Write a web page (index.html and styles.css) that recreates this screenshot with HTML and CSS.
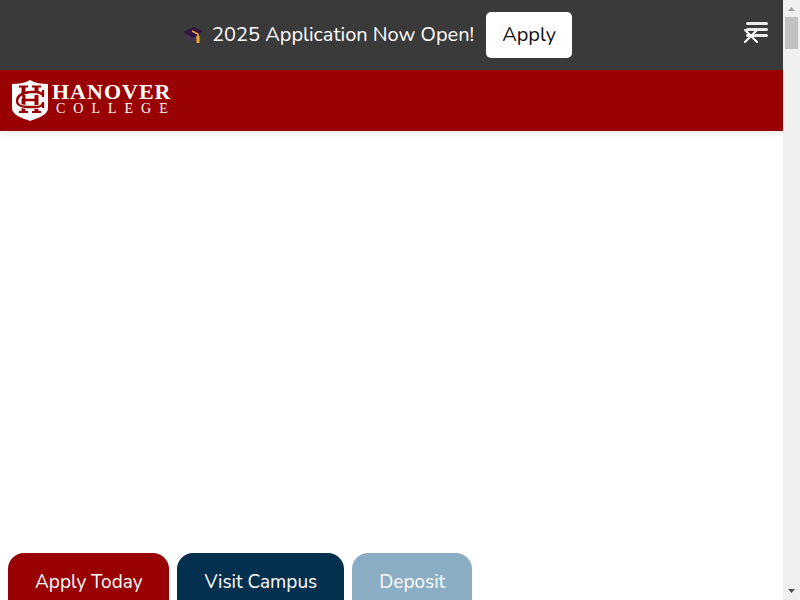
FILE: index.html
```
<!DOCTYPE html>
<html lang="en">
<head>
    <meta charset="UTF-8">
    <title>Hanover College</title>
    <link rel="stylesheet" href="styles.css">
</head>
<body>
<div class="window">
    <div class="page">
        <!-- announcement -->
        <div class="notice">
            <p class="notice-text">
                <svg class="cap" viewBox="0 0 20 20" aria-hidden="true">
                    <path d="M4 9v5c2 3 8 3 10 0V9z" fill="#493456"/>
                    <path d="M0 7L10 2l10 4-10 7z" fill="#321342"/>
                    <path d="M9 6l6 3v4" fill="none" stroke="#e9a23b" stroke-width="1.500"/>
                    <path d="M13.500 11h3v7h-3z" fill="#f0a830"/>
                </svg>
                <span>2025 Application Now Open!</span>
            </p>
            <a class="notice-apply" href="#">Apply</a>
            <div class="notice-controls">
                <button class="menu" type="button" aria-label="Menu">
                    <svg viewBox="0 0 22 16"><path d="M1.500 1.500h19M1.500 7.500h19M1.500 13.500h19"/></svg>
                </button>
                <button class="close" type="button" aria-label="Close">
                    <svg viewBox="0 0 14 14"><path d="M1 1l12 12M13 1L1 13"/></svg>
                </button>
            </div>
        </div>

        <!-- header -->
        <header class="header">
            <a class="logo" href="#">
                <svg class="shield" viewBox="0 0 36 42" aria-hidden="true">
                    <path d="M18 0C13 3 6 4 0 4v24c0 7 10 10 18 13 8-3 18-6 18-13V4C30 4 23 3 18 0z" fill="#fff"/>
                    <g fill="none" stroke="#900">
                        <path d="M11.500 6v27M24.500 6v27" stroke-width="4"/>
                        <path d="M7 6.500h9M20 6.500h9M7 32h9M20 32h9" stroke-width="2"/>
                        <path d="M12 20h12" stroke-width="2.500"/>
                        <path d="M28 13H18c-4 0-5 1-5 2M10 16c-3 1-5 3-5 5 0 4 5 6 11 6h12" stroke="#fff" stroke-width="4"/>
                        <path d="M31 10v7M31 15c-2-2-4-3-7-3h-6c-8 1-13 4-13 9 0 4 5 6 11 6h8c4 0 6-1 7-4M31 22v6" stroke-width="2.300"/>
                    </g>
                </svg>
                <span class="logo-text">
                    <span class="logo-name">HANOVER</span>
                    <span class="logo-kind">COLLEGE</span>
                </span>
            </a>
        </header>

        <main class="content"></main>

        <!-- quick links -->
        <nav class="tabs">
            <a class="tab apply" href="#">Apply Today</a>
            <a class="tab visit" href="#">Visit Campus</a>
            <a class="tab deposit" href="#">Deposit</a>
        </nav>
    </div>

    <!-- scroll bar -->
    <div class="scrollbar" aria-hidden="true">
        <svg class="arrow" viewBox="0 0 17 17"><path d="M5 11l3.500-4 3.500 4z" fill="#a3a3a3"/></svg>
        <div class="thumb"></div>
        <svg class="arrow down" viewBox="0 0 17 17"><path d="M5 6h7l-3.500 4z" fill="#505050"/></svg>
    </div>
</div>
</body>
</html>
```
FILE: styles.css
```
*{
    box-sizing: border-box;
}
body{
    margin: 0;
    background: #fff;
    font-family: Nunito, Lato, "Open Sans", sans-serif;
    font-size: 20px;
    line-height: 30px;
}
a{
    text-decoration: none;
}
svg{
    display: block;
}
.window{
    display: flex;
    min-height: 100vh;
}
.page{
    flex: 1;
    display: flex;
    flex-direction: column;
}
.notice{
    position: relative;
    display: flex;
    justify-content: center;
    align-items: center;
    gap: 12px;
    padding: 12px 48px 12px 20px;
    background: #3a3a3a;
    color: #fff;
}
.notice-text{
    display: flex;
    align-items: center;
    gap: 9px;
    margin: 0;
}
.cap{
    width: 20px;
    height: 20px;
}
.notice-apply{
    padding: 8px 16px;
    border-radius: 5px;
    background: #fff;
    color: #111;
}
/* the two buttons lie over each other */
.notice-controls{
    position: absolute;
    top: 22px;
    right: 15px;
    width: 24px;
    height: 21px;
}
.notice-controls button{
    position: absolute;
    padding: 0;
    border: 0;
    background: none;
}
.notice-controls path{
    fill: none;
    stroke: #fff;
    stroke-linecap: round;
}
.menu{
    top: 0;
    right: 0;
    width: 22px;
}
.menu path{
    stroke-width: 3;
    opacity: 0.9;
}
.close{
    bottom: 0;
    left: 0;
    width: 14px;
}
.close path{
    stroke-width: 2;
}
.header{
    padding: 10px 12px 9px;
    background: #900;
    box-shadow: 0 2px 8px rgba(0, 0, 0, 0.1);
}
.logo{
    display: inline-flex;
    gap: 4px;
    color: #fff;
    font-family: "Liberation Serif", serif;
    vertical-align: top;
}
.shield{
    width: 36px;
    height: 42px;
}
.logo-text{
    display: flex;
    flex-direction: column;
    padding-top: 2px;
}
.logo-name{
    font-size: 22px;
    font-weight: bold;
    letter-spacing: 1px;
    line-height: 20px;
}
.logo-kind{
    padding-left: 4px;
    font-size: 14px;
    letter-spacing: 8px;
    line-height: 14px;
}
.content{
    flex: 1;
}
.tabs{
    display: flex;
    gap: 8px;
    padding: 0 8px;
}
.tab{
    padding: 14px 27px 3px;
    border-radius: 16px 16px 0 0;
    color: #fff;
    font-size: 19px;
}
.apply{
    background: #900;
}
.visit{
    background: #03304f;
}
.deposit{
    background: #8baec5;
}
.scrollbar{
    display: flex;
    flex-direction: column;
    width: 17px;
    background: #f0f0f0;
}
.arrow{
    width: 17px;
    height: 17px;
}
.down{
    margin-top: auto;
}
.thumb{
    height: 32px;
    margin: 0 2px;
    background: #c1c1c1;
}
```
